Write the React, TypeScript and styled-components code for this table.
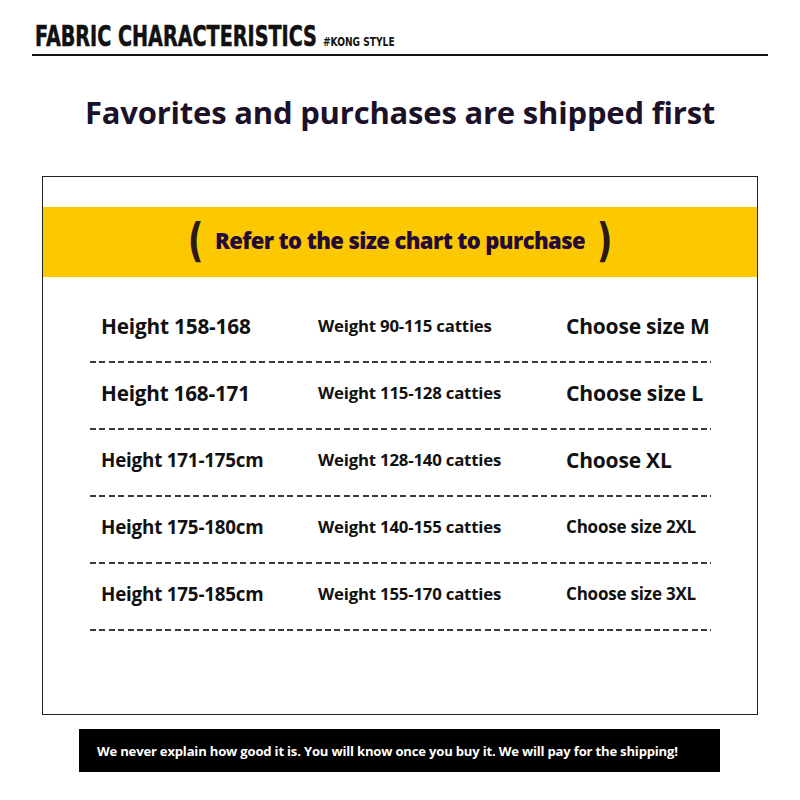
import React from "react";
import styled, { createGlobalStyle } from "styled-components";

const Global = createGlobalStyle`
  html, body { margin: 0; padding: 0; background: #fff; }
  body { width: 800px; height: 800px; overflow: hidden; font-family: "Open Sans", sans-serif; }
`;

const Page = styled.div`
  width: 800px;
  height: 800px;
  display: flex;
  flex-direction: column;
  background: #fff;
`;

const Header = styled.div`
  margin: 0 32px;
  height: 56px;
  border-bottom: 2px solid #111;
  display: flex;
  align-items: flex-end;
  padding-left: 3px;
  padding-bottom: 7px;
  box-sizing: border-box;
`;

const HeadMain = styled.span`
  display: inline-block;
  font-family: "DejaVu Sans", sans-serif;
  font-weight: 700;
  font-size: 29px;
  line-height: 22px;
  color: #111;
  -webkit-text-stroke: 0.6px #111;
  transform: scaleX(0.661);
  transform-origin: left bottom;
  width: 281px;
  white-space: nowrap;
`;

const HeadTag = styled.span`
  display: inline-block;
  font-family: "DejaVu Sans", sans-serif;
  font-weight: 700;
  font-size: 13px;
  line-height: 11px;
  color: #111;
  transform: scaleX(0.7);
  transform-origin: left bottom;
  margin-left: 7px;
  white-space: nowrap;
`;

const Title = styled.h1`
  margin: 0;
  height: 116px;
  display: flex;
  align-items: center;
  justify-content: center;
  font-family: "Open Sans", sans-serif;
  font-weight: 700;
  font-size: 31px;
  color: #1b1129;
  letter-spacing: -0.2px;
  padding-bottom: 4px;
  box-sizing: border-box;
`;

const Box = styled.div`
  margin: 4px 42px 0;
  height: 539px;
  border: 1px solid #222;
  box-sizing: border-box;
  padding-top: 30px;
  display: flex;
  flex-direction: column;
`;

const Band = styled.div`
  height: 70px;
  background: #fcc800;
  display: flex;
  align-items: center;
  justify-content: center;
  gap: 9px;
`;

const Paren = styled.span`
  font-family: "DejaVu Sans", sans-serif;
  font-size: 46px;
  font-weight: 700;
  color: #2a1a1a;
  transform: scaleX(0.75);
  line-height: 1;
  margin-top: -4px;
`;

const BandText = styled.span`
  font-family: "Open Sans", sans-serif;
  font-weight: 800;
  font-size: 22px;
  color: #240a38;
  letter-spacing: -0.6px;
  margin-top: -4px;
`;

const Rows = styled.div`
  padding: 19px 46px 0 47px;
  display: flex;
  flex-direction: column;
`;

const Row = styled.div`
  height: 67px;
  display: grid;
  grid-template-columns: 217px 248px 1fr;
  align-items: center;
  padding-left: 11px;
  padding-bottom: 8px;
  box-sizing: border-box;
  background-image: repeating-linear-gradient(
    90deg,
    #3a3a3a 0 6px,
    transparent 6px 9.4px
  );
  background-size: 100% 2px;
  background-position: 0 bottom;
  background-repeat: no-repeat;
`;

const Cell = styled.span<{ $size: number }>`
  font-family: "Open Sans", sans-serif;
  font-weight: 700;
  font-size: ${(p) => p.$size}px;
  color: #111;
  white-space: nowrap;
  letter-spacing: -0.2px;
`;

const Footer = styled.div`
  margin: 14px 80px 0 79px;
  height: 43px;
  background: #000;
  display: flex;
  align-items: center;
  padding-left: 18px;
  font-family: "Open Sans", sans-serif;
  font-weight: 700;
  font-size: 13.1px;
  color: #fff;
  letter-spacing: -0.2px;
`;

const rows = [
  { h: "Height 158-168", hs: 20.8, w: "Weight 90-115 catties", ws: 16.8, c: "Choose size M", cs: 21 },
  { h: "Height 168-171", hs: 20.7, w: "Weight 115-128 catties", ws: 16.8, c: "Choose size L", cs: 21.2 },
  { h: "Height 171-175cm", hs: 18.8, w: "Weight 128-140 catties", ws: 16.8, c: "Choose XL", cs: 21 },
  { h: "Height 175-180cm", hs: 18.8, w: "Weight 140-155 catties", ws: 16.8, c: "Choose size 2XL", cs: 17 },
  { h: "Height 175-185cm", hs: 18.8, w: "Weight 155-170 catties", ws: 16.8, c: "Choose size 3XL", cs: 17 },
];

export default function App() {
  return (
    <Page>
      <Global />
      <Header>
        <HeadMain>FABRIC CHARACTERISTICS</HeadMain>
        <HeadTag>#KONG STYLE</HeadTag>
      </Header>
      <Title>Favorites and purchases are shipped first</Title>
      <Box>
        <Band>
          <Paren>(</Paren>
          <BandText>Refer to the size chart to purchase</BandText>
          <Paren>)</Paren>
        </Band>
        <Rows>
          {rows.map((r) => (
            <Row key={r.h}>
              <Cell $size={r.hs}>{r.h}</Cell>
              <Cell $size={r.ws}>{r.w}</Cell>
              <Cell $size={r.cs}>{r.c}</Cell>
            </Row>
          ))}
        </Rows>
      </Box>
      <Footer>
        We never explain how good it is. You will know once you buy it. We will pay for the shipping!
      </Footer>
    </Page>
  );
}
